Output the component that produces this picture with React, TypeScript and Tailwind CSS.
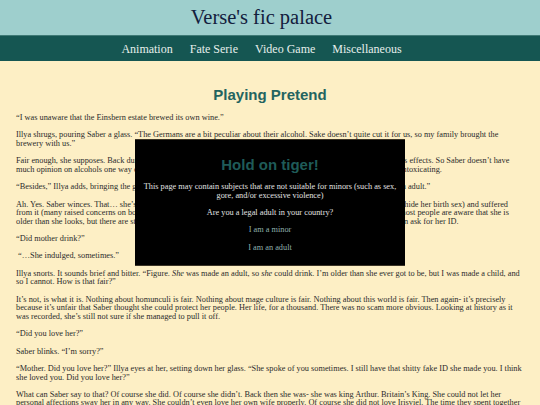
import React from "react";

const NAV_ITEMS = ["Animation", "Fate Serie", "Video Game", "Miscellaneous"];

function Header() {
  return (
    <header className="font-['Liberation_Serif',serif]">
      <div className="h-[35px] bg-[#9ecfcd] flex items-center justify-center pr-[17px]">
        <h1 className="text-[20.5px] leading-none text-[#13203d]">Verse's fic palace</h1>
      </div>
      <nav className="h-[26px] bg-[#155652] border-t border-[#3f7a76] flex items-center justify-center">
        <ul className="flex">
          {NAV_ITEMS.map((item) => (
            <li key={item} className="mr-[17px] text-[12px] text-[#e6efec]">
              {item}
            </li>
          ))}
        </ul>
      </nav>
    </header>
  );
}

// age gate shown on top of the chapter
function AgeGate() {
  return (
    <div className="fixed inset-0 flex items-center justify-center">
      <div className="w-[270px] bg-black border-y border-[#3b3426] pt-[16px] pb-[4px] px-2 text-center font-['Liberation_Serif',serif] text-[8.3px] leading-[8.65px] text-[#e2e2e2]">
        <h2 className="font-['Liberation_Sans',sans-serif] font-bold text-[15px] leading-[17px] text-[#1f5b58] mb-[10px]">
          Hold on tiger!
        </h2>
        <p className="mb-[8.65px]">
          This page may contain subjects that are not suitable for minors (such as sex, gore, and/or excessive violence)
        </p>
        <p className="mb-[8.65px]">Are you a legal adult in your country?</p>
        <p className="mb-[8.65px] text-[#8fb0ae]">I am a minor</p>
        <p className="mb-[8.65px] text-[#8fb0ae]">I am an adult</p>
      </div>
    </div>
  );
}

export default function App() {
  return (
    <div className="min-h-[405px] bg-[#fdefc5] overflow-hidden antialiased">
      <Header />
      <main className="px-4">
        <h2 className="mt-[25px] mb-[11px] text-center font-['Liberation_Sans',sans-serif] font-bold text-[15px] leading-[17px] text-[#236460]">
          Playing Pretend
        </h2>
        <div className="font-['Liberation_Serif',serif] text-[8.3px] leading-[8.65px] text-[#2b2b2b] [&>p]:mb-[8.65px]">
          <p>“I was unaware that the Einsbern estate brewed its own wine.”</p>
          <p>
            Illya shrugs, pouring Saber a glass. “The Germans are a bit peculiar about their alcohol. Sake doesn’t quite
            cut it for us, so my family brought the brewery with us.”
          </p>
          <p>
            Fair enough, she supposes. Back during her reign, ale was drunk more often than water, though she never cared
            for its effects. So Saber doesn’t have much opinion on alcohols one way or the other, save that it was always
            more bitter than sweet and never once truly intoxicating.
          </p>
          <p>
            “Besides,” Illya adds, bringing the glass to her lips with a small smile, “it’s perfectly legal. Unlike you, I
            really am an adult.”
          </p>
          <p>
            Ah. Yes. Saber winces. That… she’s the one who stopped aging at fifteen (partly due to Avalon, partly in an
            effort to hide her birth sex) and suffered from it (many raised concerns on both her youth and her fitness to
            rule, though few dared voice them). These days, most people are aware that she is older than she looks, but
            there are still plenty of shopkeepers and bartenders who take one wary glance at her and then ask for her ID.
          </p>
          <p>“Did mother drink?”</p>
          <p>&nbsp;“…She indulged, sometimes.”</p>
          <p>
            Illya snorts. It sounds brief and bitter. “Figure. <em>She</em> was made an adult, so <em>she</em> could drink.
            I’m older than she ever got to be, but I was made a child, and so I cannot. How is that fair?”
          </p>
          <p>
            It’s not, is what it is. Nothing about homunculi is fair. Nothing about mage culture is fair. Nothing about this
            world is fair. Then again- it’s precisely because it’s unfair that Saber thought she could protect her people.
            Her life, for a thousand. There was no scam more obvious. Looking at history as it was recorded, she’s still
            not sure if she managed to pull it off.
          </p>
          <p>“Did you love her?”</p>
          <p>Saber blinks. “I’m sorry?”</p>
          <p>
            “Mother. Did you love her?” Illya eyes at her, setting down her glass. “She spoke of you sometimes. I still have
            that shitty fake ID she made you. I think she loved you. Did you love her?”
          </p>
          <p>
            What can Saber say to that? Of course she did. Of course she didn’t. Back then she was- she was king Arthur.
            Britain’s King. She could not let her personal affections sway her in any way. She couldn’t even love her own
            wife properly. Of course she did not love Irisviel. The time they spent together are memories she will forever
            cherish. The thought of her still makes Saber smile. Of course she loved Irisviel.
          </p>
        </div>
      </main>
      <AgeGate />
    </div>
  );
}
